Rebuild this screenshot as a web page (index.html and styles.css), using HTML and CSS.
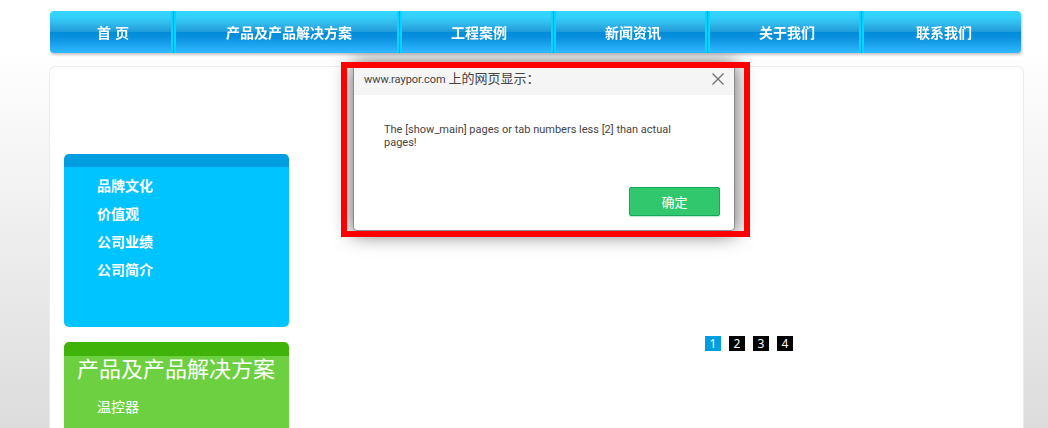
FILE: index.html
```html
<!DOCTYPE html>
<html lang="zh-CN">
<head>
<meta charset="utf-8">
<title>公司业绩</title>
<link rel="stylesheet" href="styles.css">
</head>
<body>
<nav class="nav">
  <a class="nav-item" href="#">首 页</a>
  <a class="nav-item" href="#">产品及产品解决方案</a>
  <a class="nav-item" href="#">工程案例</a>
  <a class="nav-item" href="#">新闻资讯</a>
  <a class="nav-item" href="#">关于我们</a>
  <a class="nav-item" href="#">联系我们</a>
</nav>
<main class="panel">
  <aside class="sidebar">
    <section class="box box-blue">
      <ul class="menu menu-bold">
        <li><a href="#">品牌文化</a></li>
        <li><a href="#">价值观</a></li>
        <li><a href="#">公司业绩</a></li>
        <li><a href="#">公司简介</a></li>
      </ul>
    </section>
    <section class="box box-green">
      <h2 class="box-title">产品及产品解决方案</h2>
      <ul class="menu">
        <li><a href="#">温控器</a></li>
      </ul>
    </section>
  </aside>
  <div class="content">
    <div class="pager">
      <a class="page current" href="#">1</a>
      <a class="page" href="#">2</a>
      <a class="page" href="#">3</a>
      <a class="page" href="#">4</a>
    </div>
  </div>
</main>
<div class="alert">
  <div class="dialog" role="alertdialog" aria-labelledby="alert-title" aria-describedby="alert-text">
    <header class="dialog-head">
      <h1 class="dialog-title" id="alert-title">www.raypor.com <span class="dialog-site">上的网页显示：</span></h1>
      <button class="close" type="button" aria-label="关闭">
        <svg width="14" height="14" viewBox="0 0 14 14" aria-hidden="true"><path d="M1.5 1.5l11 11M12.5 1.5l-11 11" fill="none" stroke="#707070" stroke-width="1.3"/></svg>
      </button>
    </header>
    <p class="message" id="alert-text">The [show_main] pages or tab numbers less [2] than actual pages!</p>
    <div class="actions"><button class="confirm" type="button">确定</button></div>
  </div>
</div>
</body>
</html>
```
FILE: styles.css
```css
* {
  box-sizing: border-box;
}

body {
  display: flex;
  flex-direction: column;
  min-height: 100vh;
  margin: 0;
  padding: 11px 24px 0 49px;
  background: linear-gradient(#fff 50px, #dcdcdc 428px);
  font-family: "Liberation Sans", "Noto Sans CJK SC", sans-serif;
  font-size: 14px;
}

a {
  color: inherit;
  text-decoration: none;
}

.nav {
  position: relative;
  z-index: 2;
  display: grid;
  grid-template-columns: 126fr 226fr 154fr 154fr 154fr 157fr;
  margin: 0 3px 0 1px;
  overflow: hidden;
  border-radius: 4px;
  background: linear-gradient(#33d6ff 0, #33d0fb 15%, #2fb4e8 33%, #1f9cda 49%, #008bd8 50%, #0890de 62%, #30b8ff 100%);
  filter: drop-shadow(1px 2px 1px #00000038);
}

.nav-item {
  height: 42px;
  color: #fff;
  font-weight: bold;
  line-height: 44px;
  text-align: center;
}

.nav-item:not(:last-child) {
  background: linear-gradient(90deg, #20c8ff 0 1px, #00d4ff 1px 2px, #00a4cc 2px 3px, #00d4ff 3px 4px, #20c8ff 4px) right / 5px 100% no-repeat;
}

.nav-item:last-child {
  padding-left: 3px;
}

.panel {
  display: grid;
  flex: 1;
  grid-template-columns: 225px 1fr;
  margin-top: 13px;
  padding: 87px 14px 0;
  border: 1px solid #ebebeb;
  border-bottom: 0;
  border-radius: 6px 6px 0 0;
  background: #fff;
}

.sidebar {
  display: flex;
  flex-direction: column;
  gap: 15px;
}

.box {
  color: #fff;
}

.box-blue {
  height: 173px;
  padding-top: 5px;
  border-top: 13px solid #009de0;
  border-radius: 5px;
  background: #00c4ff;
}

.box-green {
  flex: 1;
  border-top: 14px solid #40b30b;
  border-radius: 5px 5px 0 0;
  background: #6dd040;
}

.box-title {
  margin: 0 0 9px;
  padding-left: 13px;
  font-size: 22px;
  font-weight: normal;
  line-height: 28px;
  white-space: nowrap;
}

.menu {
  margin: 0;
  padding: 0 0 0 33px;
  line-height: 28px;
  list-style: none;
}

.menu-bold {
  font-weight: bold;
}

.content {
  padding: 182px 0 0 200px;
}

.pager {
  display: flex;
  gap: 8px;
  justify-content: center;
}

.page {
  width: 16px;
  background: #000;
  color: #fff;
  font-family: "Noto Sans", sans-serif;
  font-size: 12px;
  line-height: 15px;
  text-align: center;
}

.current {
  background: #009de0;
}

.alert {
  position: absolute;
  top: 62px;
  left: 341px;
  width: 409px;
  padding: 0 15px 6px 12px;
}

.alert::after {
  position: absolute;
  inset: 0;
  border: 6px solid #f00;
  content: "";
  pointer-events: none;
}

.dialog {
  border: 1px solid #8c8c8c;
  border-radius: 4px;
  background: #fff;
  box-shadow: 0 2px 20px 1px #0000009c;
  color: #444;
  font-family: Roboto, "Noto Sans CJK SC", sans-serif;
  font-size: 11px;
}

.dialog-head {
  display: flex;
  align-items: center;
  justify-content: space-between;
  height: 32px;
  padding: 0 9px 0 10px;
  border-radius: 3px 3px 0 0;
  background: #f5f5f5;
}

.dialog-title {
  margin: 0;
  font-size: 11px;
  font-weight: normal;
  line-height: 16px;
}

.dialog-site {
  font-family: "Noto Sans CJK SC", sans-serif;
  font-size: 13px;
}

.close {
  display: flex;
  padding: 0;
  border: 0;
  background: none;
}

.message {
  margin: 0;
  padding: 28px 50px 38px 30px;
  line-height: 13px;
}

.actions {
  display: flex;
  justify-content: flex-end;
  padding: 0 14px 14px;
}

.confirm {
  width: 91px;
  height: 29px;
  padding: 0;
  border: 1px solid #16a85a;
  border-radius: 2px;
  background: #31c76d;
  box-shadow: 0 1px 1px #31c76d55;
  color: #fff;
  font-family: "Noto Sans CJK SC", sans-serif;
  font-size: 13px;
}
```
